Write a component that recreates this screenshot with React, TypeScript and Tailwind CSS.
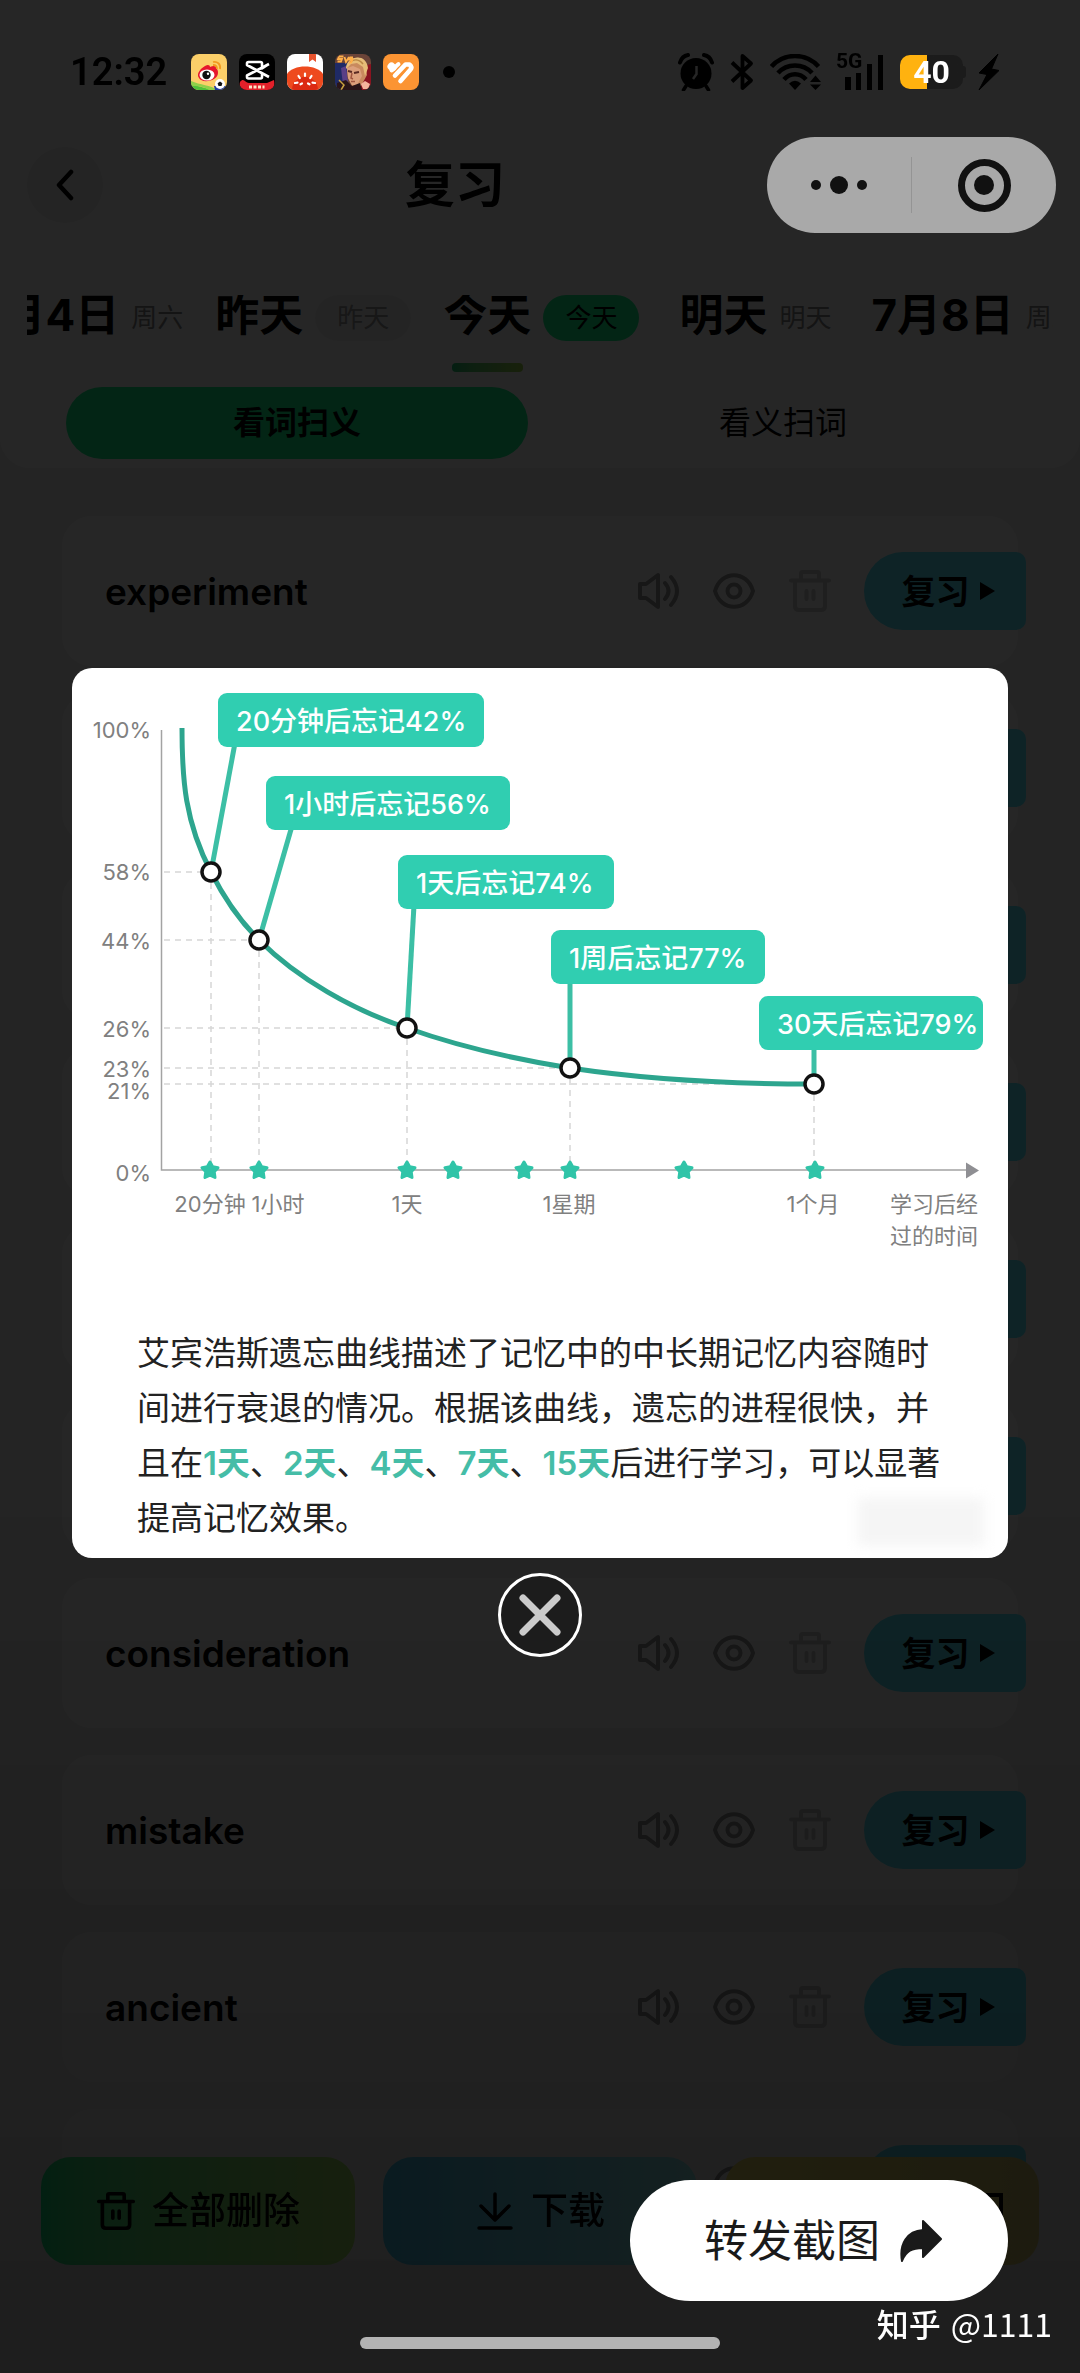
import React from "react";

type Day = { main: string; tag: string; kind: "plain" | "badge" | "active" };

const days: Day[] = [
  { main: "7月4日", tag: "周六", kind: "plain" },
  { main: "昨天", tag: "昨天", kind: "badge" },
  { main: "今天", tag: "今天", kind: "active" },
  { main: "明天", tag: "明天", kind: "plain" },
  { main: "7月8日", tag: "周二", kind: "plain" },
];

const words = ["experiment", "", "", "", "", "", "consideration", "mistake", "ancient", ""];

const tagStyles = {
  plain: "text-[#888]",
  badge: "px-[22px] rounded-full bg-[#f2f2f2] text-[#999]",
  active: "px-[22px] rounded-full bg-[#18f58c] text-black",
};

/* ---------- status bar ---------- */

function WeiboIcon() {
  return (
    <svg className="size-9 rounded-lg" viewBox="0 0 36 36">
      <rect width="36" height="36" fill="#fbcf69" />
      <path d="M0 30C10 33 16 34 20 36H0z" fill="#4fc13a" />
      <path d="M0 27C9 31 20 31 26 36H18C12 32 6 32 0 32z" fill="#8fd04a" />
      <path d="M14 12c3-2 5-1 5 1 4-2 7-1 7 2 2 3 1 8-3 10-5 3-13 3-15-1-3-4 1-9 6-12z" fill="#e6162d" />
      <ellipse cx="16" cy="21" rx="7.500" ry="5.500" fill="#fff" />
      <circle cx="15.500" cy="21" r="4.200" fill="#111" />
      <circle cx="17" cy="19.800" r="1.200" fill="#fff" />
      <path d="M22 8c4-1 8 2 7 7M22 11c3 0 4 1 4 4" fill="none" stroke="#f29a1f" strokeWidth="1.800" />
      <path d="M23 32h12v4H24z" fill="#1d3a9e" />
      <circle cx="29" cy="30" r="5" fill="#fff" />
      <path d="M29 27.500l2.400 1.800-.9 2.800h-3l-.9-2.800z" fill="#111" />
    </svg>
  );
}

function CapcutIcon() {
  return (
    <svg className="size-9 rounded-lg" viewBox="0 0 36 36">
      <rect width="36" height="36" fill="#000" />
      <path
        d="M30 10L23 14.500V9.500Q23 8 21.500 8H9.500Q8 8 8 9.500V11L30 23M30 10L8 21.500V23Q8 24.500 9.500 24.500H21.500Q23 24.500 23 23V18.500"
        fill="none"
        stroke="#fff"
        strokeWidth="2.600"
        strokeLinejoin="round"
      />
      <path d="M1 28c4-5 5 1 9 1h18l7-3c1 6 0 10-3 10H4c-3 0-4-4-3-8z" fill="#e3202a" />
      <path d="M10 33h3m1.500 0h3m1.500 0h3m1.500 0h2" stroke="#ffe6c8" strokeWidth="3" />
    </svg>
  );
}

function TomatoIcon() {
  return (
    <svg className="size-9 rounded-lg" viewBox="0 0 36 36">
      <rect width="36" height="36" fill="#fff" />
      <path d="M22 0h7v8l-3.500-2.500L22 8z" fill="#e8532e" />
      <path d="M0 20C6 10 30 10 36 20v16H0z" fill="#ee4a1e" />
      <path d="M5 36a13 13 0 0 1 26 0z" fill="#dc2a12" />
      <g stroke="#fff" strokeWidth="2.200" strokeLinecap="round">
        <path d="M18 19.500v2.500M11.500 22l1.300 2M24.500 22l-1.300 2M8 29l2.500-.3M28 29l-2.500-.3M15 29.500l-1.500.8M21 29.500l1.500.8" />
      </g>
    </svg>
  );
}

function GameIcon() {
  return (
    <svg className="size-9 rounded-lg" viewBox="0 0 36 36">
      <rect width="36" height="36" fill="#6b4438" />
      <path d="M0 9h12v27H0z" fill="#1f2a66" />
      <path d="M6 14l5-2 2 16-5 3z" fill="#5a3f86" />
      <path d="M27 12l9-2v26H20z" fill="#8a1420" />
      <path d="M12 12C13 2 30 0 31 12l1 9-6 11h-9l-4-8z" fill="#c98a5e" />
      <path d="M12 14l6-2 7 3 2 7-5 9h-5l-4-7z" fill="#dca07c" />
      <path d="M11 15C10 3 31-3 33 14l-3 8-2-9-6-4-6 1z" fill="#e6bd78" />
      <path d="M15 8c4-3 9-3 13 2" stroke="#b98744" strokeWidth="1.500" fill="none" />
      <path d="M13 17l4 1M19 19l5-1" stroke="#5a2a22" strokeWidth="2" />
      <path d="M17 19l-1 5 2 1M16 27.500h4" stroke="#a0563f" strokeWidth="1.500" fill="none" />
      <path d="M2 29l9-3 6 6 8-3 2 7H2z" fill="#2a1518" />
      <path d="M4 26l5 5-3 5" stroke="#c8a040" strokeWidth="1.500" fill="none" />
      <path d="M26 30l4-3 5 3-2 5h-5z" fill="#f3b59c" />
      <path d="M4 2.500H8.500M4 2.500L3 5H7L6 7.500H2.500M9.500 3l1.500 5 3-5M14.500 3.500H18M14.500 3.500L14 5.500h3.500L16 8.500h-2" stroke="#ffb04a" strokeWidth="1.800" fill="none" />
    </svg>
  );
}

function FitIcon() {
  return (
    <svg className="size-9 rounded-lg" viewBox="0 0 36 36">
      <rect width="36" height="36" fill="#fb9433" />
      <g fill="none" stroke="#fff" strokeLinecap="round">
        <path d="M8.500 12.500l1 1" strokeWidth="8" />
        <path d="M8.500 16.500L15.500 10" strokeWidth="4" />
        <path d="M12 21.500L22.500 10.500H26.500Q29.500 13 27.500 15.500L17.500 27" strokeWidth="4.600" strokeLinejoin="round" />
        <path d="M15 24.500L24.500 14" stroke="#fb9433" strokeWidth="1.400" />
      </g>
    </svg>
  );
}

function AlarmIcon() {
  return (
    <svg className="h-[38px] w-9" viewBox="0 0 36 38">
      <circle cx="18" cy="20.500" r="15.500" />
      <path d="M8 33l-2.500 4M28 33l2.500 4" stroke="#000" strokeWidth="3.500" strokeLinecap="round" />
      <path d="M2 9.500Q4 3 10 2M34 9.500Q32 3 26 2" stroke="#000" strokeWidth="4" fill="none" strokeLinecap="round" />
      <path d="M18.500 13v8l-3.500 5" stroke="#262626" strokeWidth="2.500" fill="none" />
    </svg>
  );
}

function BluetoothIcon() {
  return (
    <svg className="h-[38px] w-6" viewBox="0 0 24 38" fill="none" stroke="#000" strokeWidth="3.800">
      <path d="M2 9.500L21 27.500 12.500 35V3L21 10.500 2 28.500" strokeLinejoin="round" />
    </svg>
  );
}

function WifiIcon() {
  return (
    <svg className="h-9 w-[54px]" viewBox="0 0 54 36">
      <g fill="none" stroke="#000" strokeWidth="4.500">
        <path d="M1.500 12.500C14-1.500 36-1.500 48.500 12.500" />
        <path d="M8 19C17 9 33 9 42 19" />
        <path d="M14 25.500C20 18.500 30 18.500 36 25.500" />
      </g>
      <path d="M19 29.500q6-5.500 12 0l-6 6.500z" />
      <path d="M40 28l5.500-6.500L51 28zM40 30.500l5.500 5.500 5.500-5.500z" />
    </svg>
  );
}

function SignalIcon() {
  return (
    <div className="relative">
      <span className="absolute top-0 left-0 font-[Roboto] text-[21px] leading-4 font-bold">5G</span>
      <svg className="h-[38px] w-12" viewBox="0 0 48 38">
        <path d="M9 24h6v13H9zM20 20h5v17h-5zM31 11h5v26h-5zM42 2h5v35h-5z" />
      </svg>
    </div>
  );
}

function StatusBar() {
  return (
    <div className="relative z-30 flex h-36 items-center pr-20 pl-[70px]">
      <span className="w-[121px] font-[Roboto] text-[38px] leading-none font-semibold">12:32</span>
      <div className="flex items-center gap-3">
        <WeiboIcon />
        <CapcutIcon />
        <TomatoIcon />
        <GameIcon />
        <FitIcon />
      </div>
      <span className="ml-6 size-3 rounded-full bg-black" />
      <div className="ml-auto flex items-center">
        <AlarmIcon />
        <span className="ml-4">
          <BluetoothIcon />
        </span>
        <span className="ml-4">
          <WifiIcon />
        </span>
        <span className="ml-3">
          <SignalIcon />
        </span>
        <div className="ml-4 flex items-center">
          <div className="flex h-[34px] w-[63px] items-center justify-center rounded-[10px] bg-linear-to-r from-[#ffb20f] from-43% to-[#1b1b1b] to-43% font-[Roboto] text-[32px] leading-none font-bold text-white">
            40
          </div>
          <span className="h-3 w-[3px] rounded-r bg-[#1b1b1b]" />
        </div>
        <svg className="ml-3 h-9 w-[22px]" viewBox="0 0 22 36">
          <path d="M20 0L1 19l8 1.500L1 36 21 16.500 13.500 15z" stroke="#000" strokeLinejoin="round" />
        </svg>
      </div>
    </div>
  );
}

/* ---------- header ---------- */

function NavBar() {
  return (
    <div className="flex h-[82px] items-center pr-6 pl-[27px]">
      <button aria-label="返回" className="flex size-[76px] items-center justify-center rounded-full bg-[#eee]">
        <svg className="h-8 w-5" viewBox="0 0 20 32" fill="none" stroke="#000" strokeWidth="4.500" strokeLinecap="round" strokeLinejoin="round">
          <path d="M16 3L4 16l12 13" />
        </svg>
      </button>
      <h1 className="flex-1 pl-10 text-center text-[50px] leading-none font-bold">复习</h1>
      <div className="relative z-30 flex h-24 w-[289px] items-center rounded-full bg-[#a9a9a9]">
        <button aria-label="更多" className="flex flex-1 items-center justify-center gap-[9px]">
          <span className="size-2.5 rounded-full bg-[#111]" />
          <span className="size-[18px] rounded-full bg-[#111]" />
          <span className="size-2.5 rounded-full bg-[#111]" />
        </button>
        <span className="h-14 w-px bg-[#949494]" />
        <button aria-label="关闭小程序" className="flex flex-1 items-center justify-center">
          <span className="flex size-[53px] items-center justify-center rounded-full border-[7px] border-[#111]">
            <span className="size-5 rounded-full bg-[#111]" />
          </span>
        </button>
      </div>
    </div>
  );
}

function DayTabs() {
  return (
    <nav className="mx-[27px] mt-[69px] overflow-hidden">
      <div className="-ml-[59px] flex w-max items-start gap-8">
        {days.map((d) => (
          <button key={d.main} className={d.kind === "plain" ? "flex items-start gap-3 pl-2" : "flex items-start gap-3"}>
            <span className="flex h-[77px] flex-col items-center">
              <span className="text-[44px] leading-10 font-bold">{d.main}</span>
              {d.kind === "active" && (
                <span className="mt-7 h-[9px] w-[71px] rounded-sm bg-linear-to-r from-[#18c878] to-[#9fd64a]" />
              )}
            </span>
            <span className={`text-[26px] leading-[46px] ${tagStyles[d.kind]}`}>{d.tag}</span>
          </button>
        ))}
      </div>
    </nav>
  );
}

function Header() {
  return (
    <header className="rounded-b-[30px] bg-white pb-[9px]">
      <StatusBar />
      <NavBar />
      <DayTabs />
      <div className="mx-[66px] mt-[15px] grid grid-cols-2 gap-6 text-[32px] leading-[72px]">
        <button className="rounded-full bg-[#18f58c] font-bold">看词扫义</button>
        <button className="rounded-full">看义扫词</button>
      </div>
    </header>
  );
}

/* ---------- word list ---------- */

function VolumeIcon() {
  return (
    <svg className="size-11" viewBox="0 0 44 44" fill="none" stroke="#999" strokeWidth="4" strokeLinejoin="round" strokeLinecap="round">
      <path d="M4 15h6l12-9v32l-12-9H4z" />
      <path d="M29 14q7 8 0 16M35 8q12 14 0 28" />
    </svg>
  );
}

function EyeIcon() {
  return (
    <svg className="size-11" viewBox="0 0 44 44" fill="none" stroke="#999" strokeWidth="4">
      <path d="M3 22C9 1 35 1 41 22 35 43 9 43 3 22z" strokeLinejoin="round" />
      <circle cx="22" cy="22" r="6.500" />
    </svg>
  );
}

function TrashIcon({ stroke, className }: { stroke: string; className: string }) {
  return (
    <svg className={className} viewBox="0 0 44 44" fill="none" stroke={stroke} strokeWidth="4" strokeLinecap="round" strokeLinejoin="round">
      <path d="M3 11.500h38M13 11V4.500Q13 3 14.500 3h15Q31 3 31 4.500V11M7 12v25q0 4 4 4h22q4 0 4-4V12M18.500 22v8M25.500 22v8" />
    </svg>
  );
}

function WordCard({ word }: { word: string }) {
  return (
    <li className="flex h-[150px] items-center gap-8 rounded-[30px] bg-white pl-[43px]">
      <span className="flex-1 text-[37px] leading-none font-semibold">{word}</span>
      <button aria-label="发音">
        <VolumeIcon />
      </button>
      <button aria-label="显示释义">
        <EyeIcon />
      </button>
      <button aria-label="删除">
        <TrashIcon stroke="#ccc" className="size-11" />
      </button>
      <button className="-mr-2 flex h-[78px] w-[162px] items-center justify-center gap-2.5 rounded-l-[39px] rounded-r-[10px] bg-[#5ee8ff] pl-1.5 text-[34px] font-bold">
        复习
        <svg className="h-[18px] w-[15px]" viewBox="0 0 15 18">
          <path d="M0 0l15 9-15 9z" />
        </svg>
      </button>
    </li>
  );
}

function BottomBar() {
  return (
    <footer className="fixed inset-x-0 bottom-[108px] grid h-[108px] grid-cols-3 gap-7 px-[41px] text-[37px] font-medium">
      <button className="flex items-center justify-center gap-4 rounded-[30px] bg-linear-to-r from-[#14f58c] to-[#b4f56e]">
        <TrashIcon stroke="#000" className="size-10" />
        全部删除
      </button>
      <button className="flex items-center justify-center gap-4 rounded-[30px] bg-linear-to-r from-[#50d2ff] to-[#a0fafa]">
        <svg className="size-10" viewBox="0 0 40 40" fill="none" stroke="#000" strokeWidth="3.500" strokeLinecap="round" strokeLinejoin="round">
          <path d="M20 3v25M6 15l14 14 14-14M4 37h32" />
        </svg>
        下载
      </button>
      <button aria-label="曲线图" className="flex items-center justify-end rounded-[30px] bg-linear-to-r from-[#fff06e] to-[#e6d778] pr-9">
        <svg className="size-9" viewBox="0 0 36 36" fill="none" stroke="#000" strokeWidth="4">
          <path d="M2 2h32v32H2z" />
        </svg>
      </button>
    </footer>
  );
}

/* ---------- forgetting curve ---------- */

const yLabels = [
  { text: "100%", y: 62 },
  { text: "58%", y: 204 },
  { text: "44%", y: 273 },
  { text: "26%", y: 361 },
  { text: "23%", y: 401 },
  { text: "21%", y: 423 },
  { text: "0%", y: 505 },
];

const xLabels = [
  { text: "20分钟", x: 138 },
  { text: "1小时", x: 206 },
  { text: "1天", x: 335 },
  { text: "1星期", x: 497 },
  { text: "1个月", x: 741 },
  { text: "学习后经", x: 862 },
];

const points = [
  { x: 139, y: 204, fromX: 163, label: "20分钟后忘记42%", boxX: 146, boxY: 25, w: 266 },
  { x: 187, y: 272, fromX: 220, label: "1小时后忘记56%", boxX: 194, boxY: 108, w: 244 },
  { x: 335, y: 360, fromX: 342, label: "1天后忘记74%", boxX: 326, boxY: 187, w: 216 },
  { x: 498, y: 400, fromX: 498, label: "1周后忘记77%", boxX: 479, boxY: 262, w: 214 },
  { x: 742, y: 416, fromX: 742, label: "30天后忘记79%", boxX: 687, boxY: 328, w: 224 },
];

const stars = [138, 187, 335, 381, 452, 498, 612, 743];

function CurveChart() {
  return (
    <svg className="block w-full" viewBox="0 0 936 600" role="img" aria-label="艾宾浩斯遗忘曲线">
      <g stroke="#d6d6d6" strokeWidth="1.500" strokeDasharray="6 5">
        {points.map((p) => (
          <path key={p.x} d={`M92 ${p.y}H${p.x}M${p.x} ${p.y}V502`} />
        ))}
      </g>
      <path d="M89.500 62V502H896" fill="none" stroke="#a3a3a3" strokeWidth="1.500" />
      <path d="M894 494.500l13 8-13 8z" fill="#8f8f93" />

      <g stroke="#3cbfa5" strokeWidth="5">
        {points.map((p) => (
          <path key={p.label} d={`M${p.fromX} ${p.boxY + 50}L${p.x} ${p.y}`} />
        ))}
      </g>
      <path
        d="M110 60C110 112 113 154 139 204C151 228 168 253 187 272C226 311 281 342 335 360C388 379 442 391 498 400C578 412 660 416 742 416"
        fill="none"
        stroke="#2da58e"
        strokeWidth="5"
      />
      {points.map((p) => (
        <g key={p.label}>
          <circle cx={p.x} cy={p.y} r="9" fill="#fff" stroke="#111" strokeWidth="3.500" />
          <rect x={p.boxX} y={p.boxY} width={p.w} height="54" rx="9" fill="#30ceb1" />
          <text x={p.boxX + 18} y={p.boxY + 38} fontSize="27" fontWeight="500" fill="#fff">
            {p.label}
          </text>
        </g>
      ))}
      {stars.map((x) => (
        <path
          key={x}
          transform={`translate(${x} 502)`}
          d="M0-8l2.700 4.800 5.300.9-3.800 4.100.8 5.700L0 5.200l-5 2.300.8-5.700L-8-2.300l5.300-.9z"
          fill="#30c4a8"
          stroke="#30c4a8"
          strokeWidth="3"
          strokeLinejoin="round"
        />
      ))}

      <g fontSize="22" fill="#808080">
        {yLabels.map((l) => (
          <text key={l.text} x="79" y={l.y + 8} textAnchor="end">
            {l.text}
          </text>
        ))}
        {xLabels.map((l) => (
          <text key={l.text} x={l.x} y="544" textAnchor="middle">
            {l.text}
          </text>
        ))}
        <text x="862" y="576" textAnchor="middle">
          过的时间
        </text>
      </g>
    </svg>
  );
}

function Mark({ children }: { children: React.ReactNode }) {
  return (
    <b className="font-['Inter','Noto_Sans_CJK_SC',sans-serif] leading-none font-semibold text-[#45bda7]">{children}</b>
  );
}

function CurveDialog() {
  return (
    <div className="fixed inset-0 z-20 flex flex-col items-center justify-center px-[72px] pb-12">
      <section role="dialog" aria-label="遗忘曲线" className="relative w-full rounded-[20px] bg-white pb-3.5">
        <CurveChart />
        <p className="pt-14 pr-[52px] pl-[65px] font-['Noto_Sans_CJK_SC',sans-serif] text-[33px] leading-[55px] text-[#222]">
          艾宾浩斯遗忘曲线描述了记忆中的中长期记忆内容随时间进行衰退的情况。根据该曲线，遗忘的进程很快，并且在
          <Mark>1天</Mark>、<Mark>2天</Mark>、<Mark>4天</Mark>、<Mark>7天</Mark>、<Mark>15天</Mark>
          后进行学习，可以显著提高记忆效果。
        </p>
        <span className="absolute right-6 bottom-3 h-12 w-[126px] bg-[#f5f5f5] blur-[6px]" />
      </section>
      <button
        aria-label="关闭"
        className="mt-[15px] flex size-[84px] items-center justify-center rounded-full border-[3px] border-white bg-[#1c1c1c]"
      >
        <svg className="size-11" viewBox="0 0 44 44" stroke="#cbcbcb" strokeWidth="7" strokeLinecap="round">
          <path d="M5 5l34 34M39 5L5 39" />
        </svg>
      </button>
    </div>
  );
}

export default function App() {
  return (
    <div className="min-h-screen bg-[#f1f1f1] font-['Inter','Noto_Sans_CJK_SC',sans-serif] text-black">
      <Header />
      <ul className="flex flex-col gap-[27px] px-[62px] pt-12">
        {words.map((w, i) => (
          <WordCard key={i} word={w} />
        ))}
      </ul>
      <BottomBar />

      <div className="fixed inset-0 z-10 bg-linear-to-b from-black/85 from-60% to-black/88" />
      <CurveDialog />

      <button className="fixed right-[72px] bottom-[72px] z-30 flex h-[121px] w-[378px] items-center justify-center gap-5 rounded-full bg-white pl-2 text-[44px] text-[#1a1a1a]">
        转发截图
        <svg className="size-[42px]" viewBox="0 0 42 42" fill="#1a1a1a" stroke="#1a1a1a" strokeWidth="2" strokeLinejoin="round">
          <path d="M23 1L41 19 23 37V28C12 28 6 31 2 41-1 24 7 11 23 10z" />
        </svg>
      </button>
      <div className="fixed right-[28px] bottom-[34px] z-30 flex items-center gap-2.5 font-['Noto_Sans_CJK_SC',sans-serif] text-[32px] leading-8 text-white">
        <span className="font-medium">知乎</span>
        <span>@1111</span>
      </div>
      <div className="fixed bottom-6 left-1/2 z-30 h-3 w-[360px] -translate-x-1/2 rounded-full bg-[#b3b3b3]" />
    </div>
  );
}
